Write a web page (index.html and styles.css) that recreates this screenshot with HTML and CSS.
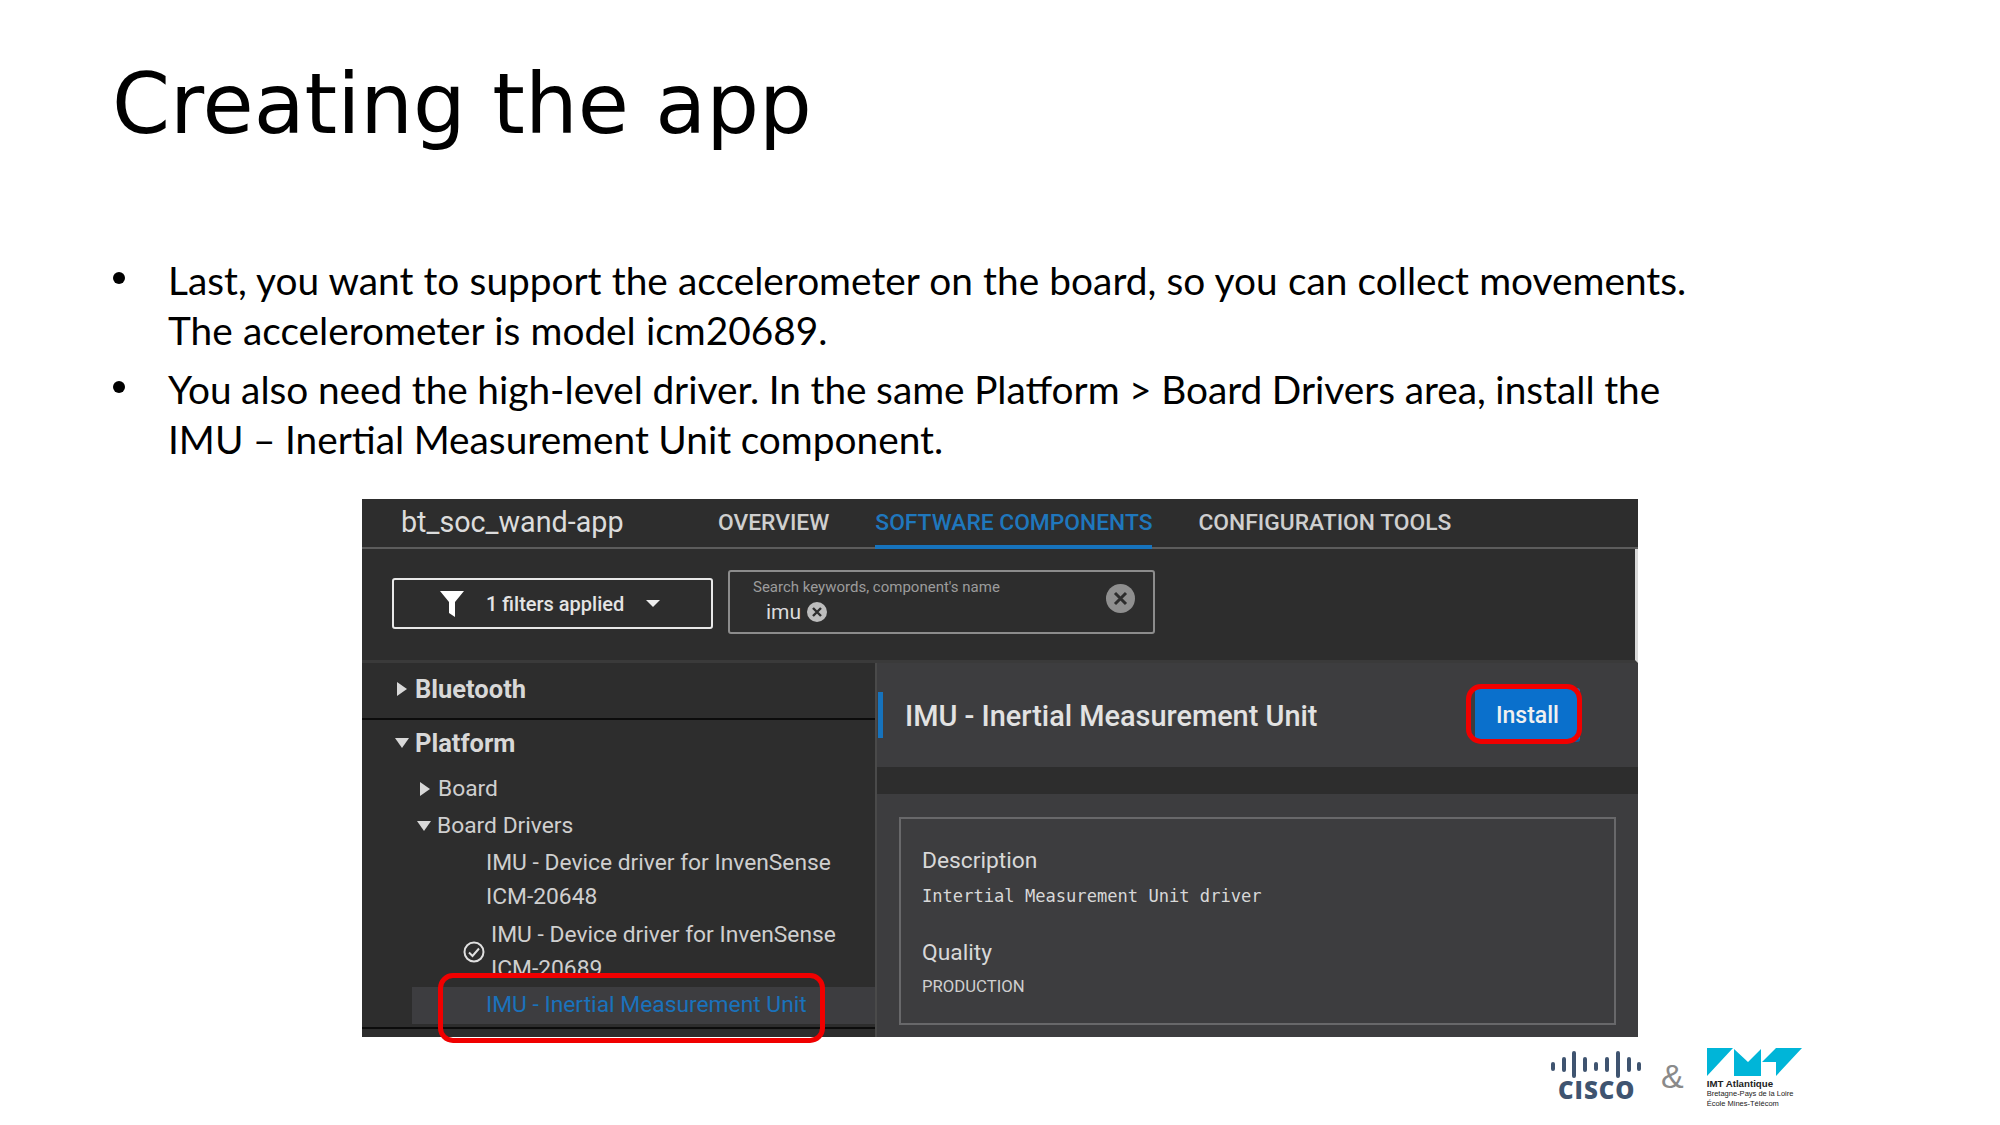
FILE: index.html
```html
<!DOCTYPE html>
<html lang="en">
<head>
    <meta charset="UTF-8">
    <title>Creating the app</title>
    <link rel="stylesheet" href="styles.css">
</head>
<body>
<div class="slide">
    <h1 class="title">Creating the app</h1>
    <ul class="bullets">
        <li class="wide">Last, you want to support the accelerometer on the board, so you can collect movements.<br>The accelerometer is model icm20689.</li>
        <li class="tight">You also need the high-level driver. In the same Platform &gt; Board Drivers area, install the<br>IMU – Inertial Measurement Unit component.</li>
    </ul>

    <div class="shot">
        <div class="topbar">
            <span class="app-name">bt_soc_wand-app</span>
            <span class="tab">OVERVIEW</span>
            <span class="tab active">SOFTWARE COMPONENTS</span>
            <span class="tab">CONFIGURATION TOOLS</span>
        </div>
        <div class="toolbar">
            <div class="filter-btn">
                <svg class="filter-icon" width="24" height="26" viewBox="0 0 24 26"><path d="M0 0H24L15 11V26L9 22V11Z" fill="#fff"/></svg>
                <span>1 filters applied</span>
                <i class="caret"></i>
            </div>
            <div class="search">
                <div class="search-label">Search keywords, component's name</div>
                <div class="search-chip">imu
                    <svg width="20" height="20" viewBox="0 0 20 20"><circle cx="10" cy="10" r="10" fill="#bdbdbd"/><path d="M6 6L14 14M14 6L6 14" stroke="#2d2d2d" stroke-width="2.4"/></svg>
                </div>
                <svg class="search-clear" width="29" height="29" viewBox="0 0 29 29"><circle cx="14.500" cy="14.500" r="14.500" fill="#8f8f8f"/><path d="M9 9L20 20M20 9L9 20" stroke="#2d2d2d" stroke-width="3"/></svg>
            </div>
        </div>
        <div class="panes">
            <div class="tree">
                <div class="group first"><i class="arrow right"></i>Bluetooth</div>
                <div class="group"><i class="arrow down"></i>Platform</div>
                <div class="node"><i class="arrow right small"></i>Board</div>
                <div class="node second"><i class="arrow down small"></i>Board Drivers</div>
                <div class="leaf">IMU - Device driver for InvenSense<br>ICM-20648</div>
                <div class="leaf checked">
                    <svg width="22" height="22" viewBox="0 0 22 22" fill="none" stroke="#e0e0e0" stroke-width="2"><circle cx="11" cy="11" r="9.500"/><path d="M6 11.500L9.500 15L16 7.500"/></svg>
                    <span>IMU - Device driver for InvenSense<br>ICM-20689</span>
                </div>
                <div class="leaf selected">IMU - Inertial Measurement Unit</div>
                <div class="tree-end"></div>
            </div>
            <div class="detail">
                <div class="detail-head">
                    <i class="blue-bar"></i>
                    <span class="detail-title">IMU - Inertial Measurement Unit</span>
                    <div class="install">Install<div class="mark mark-btn"></div></div>
                </div>
                <div class="detail-gap"></div>
                <div class="info">
                    <div class="info-label">Description</div>
                    <div class="info-mono">Intertial Measurement Unit driver</div>
                    <div class="info-label quality">Quality</div>
                    <div class="info-small">PRODUCTION</div>
                </div>
            </div>
        </div>
        <div class="mark mark-row"></div>
    </div>

    <div class="logos">
        <div class="cisco">
            <svg width="92" height="27" viewBox="0 0 92 27" stroke="#3f5470" stroke-width="4" stroke-linecap="round">
                <path d="M3 13V18M14 8V19M24 2V25M35 8V19M46 13V18M57 8V19M68 2V25M79 8V19M89 13V18"/>
            </svg>
            <span>CISCO</span>
        </div>
        <span class="amp">&amp;</span>
        <div class="imt">
            <svg width="96" height="29" viewBox="0 0 96 29" fill="#00b5d8">
                <path d="M0 0H26L0 28ZM27 1L41 14L54 1V28H27ZM55 14L69 0H95L69 28V14Z"/>
            </svg>
            <div class="imt-name">IMT Atlantique</div>
            <div class="imt-sub">Bretagne-Pays de la Loire</div>
            <div class="imt-sub">École Mines-Télécom</div>
        </div>
    </div>
</div>
</body>
</html>
```

FILE: styles.css
```css
*{
    box-sizing: border-box;
}
body{
    margin: 0;
    background: #fff;
}
.slide{
    width: 2000px;
    height: 1125px;
    overflow: hidden;
}
.title{
    margin: 0;
    padding: 57px 0 0 112px;
    height: 255px;
    font: normal 83.200px/96px "DejaVu Sans", sans-serif;
    color: #000;
}

/* bullets */
.bullets{
    margin: 0;
    padding: 0 0 0 168px;
    list-style: none;
    height: 244px;
    font: 38.800px/50.400px Lato, "Liberation Sans", sans-serif;
    color: #000;
}
.bullets li{
    position: relative;
    margin-bottom: 8px;
    white-space: nowrap;
}
.bullets li.wide{
    word-spacing: 0.300px;
}
.bullets li.tight{
    word-spacing: -0.400px;
}
.bullets li:before{
    content: "";
    position: absolute;
    left: -55px;
    top: 17px;
    width: 12px;
    height: 12px;
    border-radius: 50%;
    background: #000;
}

/* screenshot of the tool */
.shot{
    position: relative;
    margin-left: 362px;
    width: 1276px;
    height: 538px;
    background: #2d2d2d;
    font-family: Roboto, sans-serif;
    color: #d6d6d6;
}
.topbar{
    display: flex;
    align-items: stretch;
    height: 50px;
    padding-left: 39px;
    border-bottom: 2px solid #5c5c5c;
}
.app-name{
    width: 317px;
    font-size: 28.700px;
    line-height: 47px;
    color: #dcdcdc;
}
.tab{
    margin-right: 46px;
    font-size: 22.800px;
    font-weight: 500;
    line-height: 47px;
    color: #cfcfcf;
}
.tab.active{
    height: 50px;
    border-bottom: 4px solid #1673bd;
    color: #1f77bd;
}
.toolbar{
    display: flex;
    align-items: flex-start;
    gap: 15px;
    height: 114px;
    padding: 21px 0 0 31px;
    border-bottom: 3px solid #3a3a3a;
    border-right: 3px solid #d8d8d8;
}
.filter-btn{
    display: flex;
    align-items: center;
    width: 321px;
    height: 51px;
    margin-top: 8px;
    margin-left: -1px;
    padding-left: 46px;
    border: 2px solid #e8e8e8;
    border-radius: 3px;
    font-size: 20px;
    font-weight: 500;
    color: #e4e4e4;
}
.filter-icon{
    margin-right: 22px;
}
.caret{
    margin-left: 22px;
    border: 7px solid transparent;
    border-top: 7px solid #eee;
    border-bottom: 0;
}
.search{
    position: relative;
    width: 427px;
    height: 64px;
    padding: 5px 0 0 23px;
    border: 2px solid #8c8c8c;
    border-radius: 3px;
}
.search-label{
    font-size: 15px;
    line-height: 20px;
    color: #9c9c9c;
}
.search-chip{
    display: flex;
    align-items: center;
    gap: 6px;
    margin-top: 2px;
    padding-left: 13px;
    font-size: 21px;
    line-height: 26px;
    color: #dcdcdc;
}
.search-clear{
    position: absolute;
    right: 18px;
    top: 12px;
}

/* left tree */
.panes{
    display: grid;
    grid-template-columns: 515px 1fr;
    height: 374px;
}
.tree{
    border-right: 2px solid #4a4a4a;
}
.group{
    display: flex;
    align-items: center;
    padding: 0 0 5px 33px;
    height: 50px;
    font-size: 25.500px;
    font-weight: 700;
    color: #d8d8d8;
}
.group.first{
    height: 57px;
    padding-bottom: 3px;
    border-bottom: 2px solid #0c0c0c;
}
.arrow{
    display: block;
    flex: none;
    width: 0;
    height: 0;
    margin-right: 8px;
    border-style: solid;
    border-color: transparent;
}
.arrow.right{
    margin-left: 2px;
    border-width: 7px 0 7px 10px;
    border-left-color: #d8d8d8;
}
.arrow.down{
    border-width: 10px 7px 0 7px;
    border-top-color: #d8d8d8;
    margin-right: 6px;
}
.node{
    display: flex;
    align-items: center;
    padding-left: 56px;
    height: 37px;
    font-size: 22.800px;
    color: #cfcfcf;
}
.node.second{
    padding-left: 55px;
    margin-bottom: 2px;
}
.leaf{
    padding-left: 124px;
    font-size: 22.800px;
    line-height: 34px;
    color: #cfcfcf;
}
.leaf.checked{
    display: flex;
    align-items: center;
    gap: 6px;
    padding: 3px 0 0 101px;
    height: 72px;
}
.leaf.selected{
    margin-left: 50px;
    margin-top: 1px;
    padding-left: 74px;
    height: 37px;
    line-height: 36px;
    background: #3d3d40;
    color: #1a72bb;
}
.tree-end{
    margin-top: 3px;
    height: 2px;
    background: #0c0c0c;
}

/* red highlights drawn over the shot */
.mark{
    position: absolute;
    border: 5px solid #f00000;
    border-radius: 15px;
}
.mark-row{
    left: 76px;
    top: 474px;
    width: 387px;
    height: 70px;
}
.mark-btn{
    left: -9px;
    top: -4px;
    width: 116px;
    height: 60px;
}

/* right detail */
.detail{
    display: flex;
    flex-direction: column;
    background: #3d3d3f;
}
.detail-head{
    display: flex;
    align-items: center;
    height: 104px;
}
.blue-bar{
    width: 5px;
    height: 46px;
    margin-left: 1px;
    background: #1673bd;
}
.detail-title{
    flex: 1;
    margin-left: 22px;
    padding-top: 2px;
    font-size: 28.900px;
    font-weight: 500;
    color: #e2e2e2;
}
.install{
    position: relative;
    width: 105px;
    height: 54px;
    margin-right: 58px;
    border-radius: 3px;
    background: #0a70cc;
    border-bottom: 3px solid #0a5aa3;
    font-size: 23px;
    font-weight: 500;
    line-height: 56px;
    text-align: center;
    color: #f0f0f0;
}
.detail-gap{
    height: 27px;
    background: #2d2d2d;
}
.info{
    margin: 23px 22px 0 22px;
    height: 208px;
    padding: 27px 0 0 21px;
    border: 2px solid #68686a;
}
.info-label{
    font-size: 22.800px;
    line-height: 30px;
    color: #d8d8d8;
}
.info-label.quality{
    margin-top: 27px;
}
.info-mono{
    margin-top: 5px;
    font: 17.100px/30px "DejaVu Sans Mono", "Liberation Mono", monospace;
    color: #d8d8d8;
}
.info-small{
    margin-top: 7px;
    font-size: 16.700px;
    line-height: 24px;
    color: #cfcfcf;
}

/* footer logos */
.logos{
    display: flex;
    align-items: flex-start;
    margin: 11px 0 0 1550px;
}
.cisco{
    display: flex;
    flex-direction: column;
    width: 92px;
    margin-top: 3px;
}
.cisco span{
    padding-left: 8px;
    font: 800 24px/24px "Open Sans", sans-serif;
    letter-spacing: 1px;
    color: #3f5470;
}
.amp{
    margin: 8px 23px 0 19px;
    font: 34px/40px "Liberation Sans", sans-serif;
    color: #8a8a8a;
}
.imt{
    color: #222;
    font-family: "Liberation Sans", sans-serif;
}
.imt svg{
    display: block;
}
.imt-name{
    margin-top: 1px;
    font-size: 9.700px;
    font-weight: 700;
    line-height: 11px;
}
.imt-sub{
    font-size: 7.500px;
    line-height: 10px;
}
```
